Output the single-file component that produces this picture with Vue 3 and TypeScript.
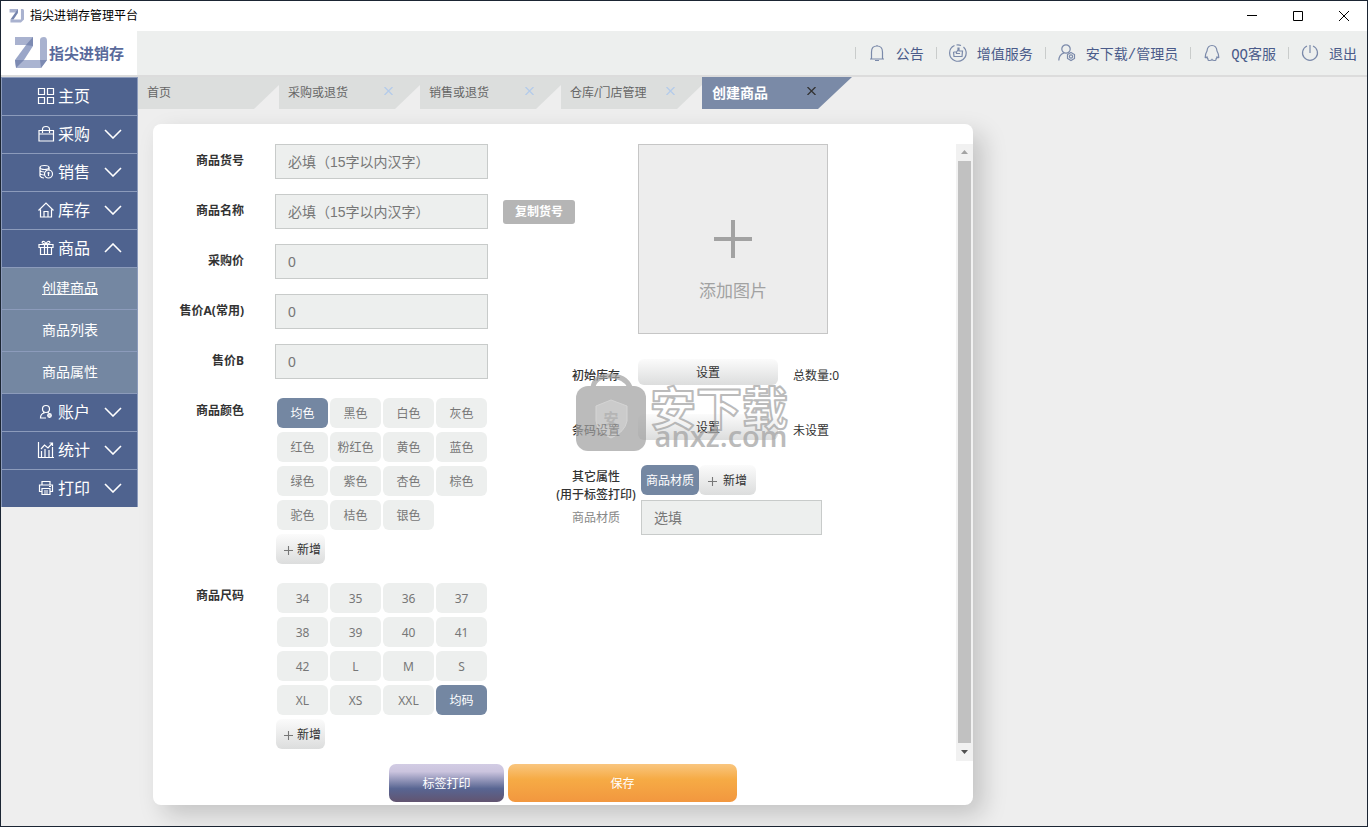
<script setup lang="ts">
import { ref } from 'vue'

interface MenuItem {
  name: string
  icon: string
  arrow: boolean
  children?: string[]
}

const menu: MenuItem[] = [
  { name: '主页', icon: 'grid', arrow: false },
  { name: '采购', icon: 'bag', arrow: true },
  { name: '销售', icon: 'coins', arrow: true },
  { name: '库存', icon: 'house', arrow: true },
  { name: '商品', icon: 'gift', arrow: true, children: ['创建商品', '商品列表', '商品属性'] },
  { name: '账户', icon: 'user', arrow: true },
  { name: '统计', icon: 'chart', arrow: true },
  { name: '打印', icon: 'printer', arrow: true },
]

const links = [
  { name: '公告', icon: 'bell' },
  { name: '增值服务', icon: 'thumb' },
  { name: '安下载/管理员', icon: 'admin' },
  { name: 'QQ客服', icon: 'qq' },
  { name: '退出', icon: 'power' },
]

const tabs = [
  { name: '首页', closable: false },
  { name: '采购或退货', closable: true },
  { name: '销售或退货', closable: true },
  { name: '仓库/门店管理', closable: true },
]

const fields = [
  { id: 'code', label: '商品货号', hint: '必填（15字以内汉字）', copy: false },
  { id: 'name', label: '商品名称', hint: '必填（15字以内汉字）', copy: true },
  { id: 'cost', label: '采购价', hint: '0', copy: false },
  { id: 'price-a', label: '售价A(常用)', hint: '0', copy: false },
  { id: 'price-b', label: '售价B', hint: '0', copy: false },
]

const colors = ['均色', '黑色', '白色', '灰色', '红色', '粉红色', '黄色', '蓝色', '绿色', '紫色', '杏色', '棕色', '驼色', '桔色', '银色']
const sizes = ['34', '35', '36', '37', '38', '39', '40', '41', '42', 'L', 'M', 'S', 'XL', 'XS', 'XXL', '均码']

const values = ref<Record<string, string>>({})
const color = ref('均色')
const size = ref('均码')
const material = ref('')
</script>

<template>
  <div class="window">
    <header class="titlebar">
      <svg class="mini-logo" viewBox="0 0 34 32">
        <path d="M0 0H19V8H0Z M2 24H33L26 31H2Z M26 0H30Q33 0 33 4V24L26 24Z" fill="#a9b2cf" />
        <path d="M19 0V9L9 24H2Z" fill="#7484ad" />
      </svg>
      <span class="title">指尖进销存管理平台</span>
      <div class="win-buttons">
        <button type="button" aria-label="最小化"><svg viewBox="0 0 10 10"><path d="M0 4.500H10" /></svg></button>
        <button type="button" aria-label="最大化"><svg viewBox="0 0 10 10"><path d="M.5 .5H9.500V9.500H.5Z" /></svg></button>
        <button type="button" aria-label="关闭"><svg viewBox="0 0 10 10"><path d="M0 0L10 10M10 0L0 10" /></svg></button>
      </div>
    </header>

    <div class="topbar">
      <div class="brand">
        <svg class="logo" viewBox="0 0 34 32">
          <path d="M1 0H19V8H1Z" fill="#a9b2cf" />
          <path d="M26 3Q26 0 30 0Q33 0 33 4V23H26Z" fill="#a9b2cf" />
          <path d="M2 23H33L27 31H2Z" fill="#aab4d1" />
          <path d="M19 0V9L10 23L2 30L1 23L12 8Z" fill="#9aa6c8" />
          <path d="M19 0V9L12 8Z M1 23H10L2 31Z M26 23H33L27 31Z" fill="#7c8ab2" />
        </svg>
        <span>指尖进销存</span>
      </div>
      <nav class="links">
        <a v-for="l in links" :key="l.name" href="#">
          <svg viewBox="0 0 18 18">
            <path v-if="l.icon === 'bell'" d="M2 15H16M3.500 15V8Q3.500 2 9 2Q14.500 2 14.500 8V15M7 16.500H11M9 2V1" />
            <template v-else-if="l.icon === 'thumb'">
              <path d="M5.500 1.500A8.200 8.200 0 0 0 6 16.700M7.500 1A8.200 8.200 0 0 1 12 1.500M14.500 3A8.200 8.200 0 0 1 6 16.700" />
              <path d="M4.500 8H7.500L9 6V4H10V7H13.500L13 12.500H5L4.500 8M7.500 8V9.500H11" />
            </template>
            <template v-else-if="l.icon === 'admin'">
              <circle cx="8" cy="5" r="4.200" />
              <path d="M.8 16.500Q1 10.500 6 9M13 8.500L16.500 10.500V14.500L13 16.500L9.500 14.500V10.500Z" />
              <circle cx="13" cy="12.500" r="1.600" />
            </template>
            <path v-else-if="l.icon === 'qq'" d="M9 1.500Q4.500 1.500 4 7Q2.200 10 2.200 13.500Q3 14 4 13Q4.500 14.500 5 15Q4.700 16.500 6.500 16.500Q8.500 16.500 9 15.500Q9.500 16.500 11.500 16.500Q13.300 16.500 13 15Q13.500 14.500 14 13Q15 14 15.800 13.500Q15.800 10 14 7Q13.500 1.500 9 1.500Z" />
            <path v-else d="M6 2A7.500 7.500 0 1 0 12 2M9 1V9" />
          </svg>
          <span>{{ l.name }}</span>
        </a>
      </nav>
    </div>

    <div class="body">
      <aside class="sidebar">
        <template v-for="m in menu" :key="m.name">
          <a class="item" href="#">
            <svg class="icon" viewBox="0 0 18 18">
              <path v-if="m.icon === 'grid'" d="M1.500 1.500H7.500V7.500H1.500ZM10.500 1.500H16.500V7.500H10.500ZM1.500 10.500H7.500V16.500H1.500ZM10.500 10.500H16.500V16.500H10.500Z" />
              <path v-else-if="m.icon === 'bag'" d="M2 5.500H16.500V16H2ZM2 9H16.500M5.500 8V4.500Q5.500 1.500 9 1.500Q12.500 1.500 12.500 4.500V8" />
              <template v-else-if="m.icon === 'coins'">
                <ellipse cx="7.500" cy="4.500" rx="4.500" ry="2" />
                <path d="M3 4.500V13Q4 15 7 15M3 7.500Q4 9 7 9M3 10.500Q4 12 7 12M12 4.500V7" />
                <circle cx="11.500" cy="11" r="4" />
                <path d="M11.500 9V13M10.300 10H12.700" />
              </template>
              <path v-else-if="m.icon === 'house'" d="M1.500 9.500L9 2L16.500 9.500M3.500 8.500V16H14.500V8.500M7 16V10.500H11V16" />
              <g v-else-if="m.icon === 'gift'">
                <path d="M2 5.500H16V8.500H2ZM3.500 8.500H14.500V15.500H3.500ZM7.500 5.500V15.500M10.500 5.500V15.500" />
                <path d="M9 5Q4 4.500 5.500 2.500Q7.500 1.500 9 5Q10.500 1.500 12.500 2.500Q14 4.500 9 5" />
              </g>
              <template v-else-if="m.icon === 'user'">
                <circle cx="9" cy="6" r="3.500" />
                <path d="M6.500 8.500L7 10Q3.500 11 3.500 15H9M11.500 8.500L11 10" />
                <circle cx="12.500" cy="12.500" r="1.800" fill="#c9d0df" />
              </template>
              <path v-else-if="m.icon === 'chart'" d="M1.500 1V16.500H17M4.500 16V10M8 16V8M12 16V9M15.500 16V6M4 8L7.500 4L11 7L15.500 2M12.500 2H15.500V5" />
              <path v-else d="M5 5.500V2.500H13V5.500M5 12.500H2.500V6H15.500V12.500H13M5 9.500H13V15.500H5ZM7 12H11M7 14H11M12 7.500H14" />
            </svg>
            <span>{{ m.name }}</span>
            <svg v-if="m.arrow" class="arrow" viewBox="0 0 18 10">
              <path :d="m.children ? 'M1 9L9 1L17 9' : 'M1 1L9 9L17 1'" />
            </svg>
          </a>
          <a v-for="(c, i) in m.children" :key="c" class="sub" :class="{ current: i === 0 }" href="#">{{ c }}</a>
        </template>
      </aside>

      <main class="main">
        <nav class="tabs">
          <div v-for="t in tabs" :key="t.name" class="tab">
            <a href="#">{{ t.name }}</a>
            <button v-if="t.closable" type="button" aria-label="关闭标签">
              <svg viewBox="0 0 8 8"><path d="M0 0L8 8M8 0L0 8" /></svg>
            </button>
          </div>
          <div class="tab active">
            <a href="#">创建商品</a>
            <button type="button" aria-label="关闭标签">
              <svg viewBox="0 0 8 8"><path d="M0 0L8 8M8 0L0 8" /></svg>
            </button>
          </div>
        </nav>

        <form class="card" @submit.prevent>
          <div class="content">
            <section class="left">
              <div class="fields">
                <div v-for="f in fields" :key="f.id" class="row">
                  <label class="label" :for="f.id">{{ f.label }}</label>
                  <input :id="f.id" v-model="values[f.id]" class="box" type="text" :placeholder="f.hint" />
                  <button v-if="f.copy" class="copy" type="button">复制货号</button>
                </div>
              </div>
              <div class="row group">
                <span class="label">商品颜色</span>
                <div>
                  <div class="chips">
                    <button v-for="c in colors" :key="c" type="button" class="chip" :class="{ on: c === color }" @click="color = c">{{ c }}</button>
                  </div>
                  <button class="add" type="button"><svg viewBox="0 0 10 10"><path d="M0 5H10M5 0V10" /></svg>新增</button>
                </div>
              </div>
              <div class="row group">
                <span class="label">商品尺码</span>
                <div>
                  <div class="chips">
                    <button v-for="s in sizes" :key="s" type="button" class="chip" :class="{ on: s === size }" @click="size = s">{{ s }}</button>
                  </div>
                  <button class="add" type="button"><svg viewBox="0 0 10 10"><path d="M0 5H10M5 0V10" /></svg>新增</button>
                </div>
              </div>
            </section>

            <section class="right">
              <button class="picture" type="button">
                <svg viewBox="0 0 38 38"><path d="M0 19H38M19 0V38" /></svg>
                <span>添加图片</span>
              </button>
              <div class="settings">
                <div class="setting">
                  <span class="name">初始库存</span>
                  <button class="set" type="button">设置</button>
                  <span>总数量:0</span>
                </div>
                <div class="setting">
                  <span class="name">条码设置</span>
                  <button class="set" type="button">设置</button>
                  <span>未设置</span>
                </div>
                <svg class="stamp" viewBox="0 0 216 80">
                  <g opacity=".72">
                    <path d="M18 14Q20 3 35 3Q50 3 55 14" fill="none" stroke="#a2a2a2" stroke-width="5" />
                    <rect x="1" y="13" width="70" height="65" rx="12" fill="#a2a2a2" />
                    <path d="M36 27L52 33V48Q50 59 36 65Q22 59 21 48V33Z" fill="#b8b8b8" stroke="#c4c4c4" />
                    <text x="36" y="51" font-size="15" font-weight="700" text-anchor="middle" fill="#999">安</text>
                    <text x="144" y="52" font-size="46" font-weight="700" text-anchor="middle" fill="#fff" fill-opacity=".4" stroke="#a2a2a2" stroke-width="2" stroke-linejoin="round">安下载</text>
                    <text class="domain" x="146" y="74" font-size="29" text-anchor="middle" fill="#a2a2a2">anxz.com</text>
                  </g>
                </svg>
              </div>
              <div class="attributes">
                <div class="attr-labels">
                  <span>其它属性<br />(用于标签打印)</span>
                  <label for="material">商品材质</label>
                </div>
                <div class="attr-values">
                  <div class="attr-buttons">
                    <button type="button" class="chip on">商品材质</button>
                    <button class="add wide" type="button"><svg viewBox="0 0 10 10"><path d="M0 5H10M5 0V10" /></svg>新增</button>
                  </div>
                  <input id="material" v-model="material" class="box" type="text" placeholder="选填" />
                </div>
              </div>
            </section>

            <div class="scrollbar" aria-hidden="true">
              <svg viewBox="0 0 7 4"><path d="M0 4L3.500 0L7 4Z" fill="#a3a3a3" /></svg>
              <div class="thumb"></div>
              <svg viewBox="0 0 7 4"><path d="M0 0L3.500 4L7 0Z" fill="#505050" /></svg>
            </div>
          </div>

          <footer class="actions">
            <button class="print" type="button">标签打印</button>
            <button class="save" type="submit">保存</button>
          </footer>
        </form>
      </main>
    </div>
  </div>
</template>

<style>
body {
  margin: 0;
  background: #eee;
}
</style>

<style scoped>
* {
  box-sizing: border-box;
}
.window {
  display: flex;
  flex-direction: column;
  min-height: 100vh;
  border: 1px solid #1b2533;
  background: #eee;
  color: #333;
  font: 12px/18px "Noto Sans", "Noto Sans CJK SC", sans-serif;
}
button,
input {
  margin: 0;
  padding: 0;
  border: 0;
  background: none;
  color: inherit;
  font: inherit;
}
a {
  color: inherit;
  text-decoration: none;
}
svg {
  flex: none;
  fill: none;
}
.titlebar {
  display: flex;
  align-items: center;
  height: 30px;
  padding-left: 8px;
  background: #fff;
  color: #000;
}
.mini-logo {
  width: 16px;
  height: 14px;
  margin-right: 5px;
}
.win-buttons {
  display: flex;
  margin-left: auto;
}
.win-buttons button {
  display: grid;
  place-items: center;
  width: 46px;
  height: 28px;
}
.win-buttons svg {
  width: 10px;
  height: 10px;
  stroke: #000;
}
.topbar {
  display: flex;
  justify-content: space-between;
  height: 46px;
  border-bottom: 2px solid #dcdcdc;
  background: #edefee;
}
.brand {
  display: flex;
  align-items: center;
  gap: 1px;
  width: 136px;
  padding-left: 13px;
  background: #fff;
  color: #5a6a9b;
}
.logo {
  width: 34px;
  height: 32px;
}
.brand span {
  font-size: 15px;
  font-weight: 700;
  white-space: nowrap;
}
.links {
  display: flex;
  align-items: center;
  padding-right: 10px;
  color: #4a5b8a;
  font: 14px/18px "Liberation Mono", "Noto Sans CJK SC", monospace;
}
.links a {
  display: flex;
  align-items: center;
  gap: 10px;
  height: 12px;
  padding: 0 12px;
  border-left: 1px solid #c9cccb;
  white-space: nowrap;
}
.links a:last-child {
  padding-right: 0;
}
.links span {
  padding-top: 3px;
}
.links svg {
  width: 18px;
  height: 18px;
  stroke: #7b8aaa;
  stroke-width: 1.2;
}
.body {
  display: flex;
  flex: 1;
  align-items: flex-start;
}
.sidebar {
  flex: none;
  width: 137px;
  border: 1px solid #8c9bbb;
  border-width: 0 1px;
  color: #fff;
}
.item {
  display: flex;
  align-items: center;
  height: 38px;
  padding: 0 15px 2px 35px;
  border-top: 1px solid #8c9bbb;
  background: #4f638f;
  font-size: 16px;
}
.item .icon {
  width: 18px;
  height: 18px;
  margin-right: 3px;
  stroke: #fff;
  stroke-width: 1.2;
}
.item .arrow {
  width: 18px;
  height: 10px;
  margin-left: auto;
  stroke: #fff;
  stroke-width: 1.6;
}
.sub {
  display: block;
  height: 42px;
  padding-left: 1px;
  border-top: 1px solid #8c9bbb;
  background: #7487a2;
  font-size: 14px;
  line-height: 40px;
  text-align: center;
}
.current {
  text-decoration: underline;
}
.main {
  flex: 1;
  min-width: 0;
}
.tabs {
  display: flex;
  height: 32px;
}
.tab {
  display: flex;
  align-items: center;
  justify-content: space-between;
  width: 141px;
  padding: 0 27px 0 9px;
  background: #dcdedd;
  color: #666;
  clip-path: polygon(0 0, 100% 0, 100% 8px, 116px 100%, 0 100%);
  white-space: nowrap;
}
.tab button {
  display: grid;
  width: 9px;
  height: 20px;
  align-items: start;
  padding-top: 4px;
}
.tab svg {
  width: 9px;
  height: 8px;
  stroke: #b4cbea;
  stroke-width: 1.3;
}
.tab.active {
  width: 150px;
  padding: 0 36px 0 10px;
  background: #7a8aa7;
  color: #fff;
  font-size: 14px;
  font-weight: 700;
  clip-path: polygon(0 0, 100% 0, 116px 100%, 0 100%);
}
.tab.active svg {
  stroke: #333;
}
.card {
  max-width: 820px;
  margin: 15px 15px 21px;
  padding: 20px 0 3px;
  border-radius: 8px;
  background: #fff;
  box-shadow: 10px 10px 24px rgba(0, 0, 0, 0.18);
}
.content {
  display: grid;
  grid-template-columns: 403px 1fr 17px;
}
.left {
  display: flex;
  flex-direction: column;
  gap: 19px;
  padding-bottom: 12px;
}
.fields {
  display: flex;
  flex-direction: column;
  gap: 15px;
}
.row {
  display: flex;
  align-items: center;
}
.label {
  flex: none;
  width: 91px;
  margin-right: 31px;
  font-weight: 700;
  line-height: 26px;
  text-align: right;
}
.fields .label {
  padding-bottom: 2px;
}
.group {
  align-items: flex-start;
}
.box {
  flex: none;
  width: 213px;
  height: 35px;
  padding: 0 12px;
  border: 1px solid #c8cbca;
  background: #edefee;
  font: 14px/20px "Liberation Sans", "Noto Sans CJK SC", sans-serif;
}
.box::placeholder {
  color: #777;
  opacity: 1;
}
.copy {
  flex: none;
  width: 72px;
  height: 24px;
  margin-left: 15px;
  border-radius: 3px;
  background: #b5b5b5;
  color: #fff;
  font-weight: 700;
}
.chips {
  display: grid;
  grid-template-columns: repeat(4, 51px);
  gap: 4px 2px;
  padding-left: 2px;
}
.chip,
.add,
.set,
.actions button {
  padding-top: 2px;
}
.chip {
  height: 30px;
  border-radius: 6px;
  background: #edefee;
  color: #777;
  white-space: nowrap;
}
.chip.on {
  background: #7487a2;
  color: #fff;
}
.add {
  display: flex;
  align-items: center;
  justify-content: center;
  gap: 4px;
  width: 49px;
  height: 30px;
  margin: 4px 0 0 1px;
  padding-left: 4px;
  border-radius: 6px;
  background: linear-gradient(#fbfbfb, #dcdddd);
}
.add svg {
  width: 9px;
  height: 9px;
  stroke: #777;
  stroke-width: 1.2;
}
.add.wide {
  gap: 6px;
  width: 57px;
  margin: 0;
  padding-left: 0;
}
.picture {
  display: flex;
  flex-direction: column;
  align-items: center;
  justify-content: flex-end;
  gap: 21px;
  width: 190px;
  height: 190px;
  margin-left: 82px;
  padding-bottom: 30px;
  border: 1px solid #c6c6c6;
  background: #ededed;
  color: #a2a2a2;
  font-size: 17px;
  line-height: 24px;
}
.picture svg {
  width: 38px;
  height: 38px;
  stroke: #a2a2a2;
  stroke-width: 4;
}
.settings {
  position: relative;
  display: flex;
  flex-direction: column;
  gap: 29px;
  margin-top: 25px;
}
.setting {
  display: flex;
  align-items: flex-end;
  white-space: nowrap;
}
.name {
  width: 80px;
  margin-right: 2px;
  font-weight: 500;
  text-align: center;
}
.set {
  width: 140px;
  height: 26px;
  margin-right: 15px;
  border-radius: 6px;
  background: linear-gradient(#fbfbfb, #dcdddd);
}
.stamp {
  position: absolute;
  top: 14px;
  left: 19px;
  width: 216px;
  height: 80px;
  overflow: visible;
  pointer-events: none;
  font-family: "Noto Sans CJK SC", sans-serif;
}
.domain {
  font-family: "Open Sans", sans-serif;
  font-weight: 600;
}
.attributes {
  display: flex;
  gap: 5px;
  margin-top: 25px;
}
.attr-labels {
  display: flex;
  flex-direction: column;
  gap: 5px;
  width: 80px;
  padding-top: 3px;
  font-weight: 500;
  text-align: center;
  white-space: nowrap;
}
.attr-labels label {
  color: #888;
  font-weight: 400;
}
.attr-values {
  display: flex;
  flex-direction: column;
  gap: 5px;
}
.attr-buttons {
  display: flex;
}
.attr-buttons .chip {
  width: 58px;
}
.attr-values .box {
  width: 181px;
}
.scrollbar {
  display: flex;
  flex-direction: column;
  align-items: center;
  gap: 7px;
  padding: 6px 0 7px;
  background: #f1f1f1;
}
.scrollbar svg {
  width: 7px;
  height: 4px;
}
.thumb {
  flex: 1;
  width: 13px;
  background: #c1c1c1;
}
.actions {
  display: flex;
  justify-content: center;
  gap: 4px;
  margin-top: 3px;
  color: #fff;
}
.actions button {
  height: 38px;
  border-radius: 7px;
}
.actions .print {
  width: 115px;
  background: linear-gradient(#d2cce4, #cbc4de 20%, #586592 65%, #625470);
}
.actions .save {
  width: 229px;
  background: linear-gradient(#f9c67f, #f6ab45 40%, #f2973f);
}
</style>
